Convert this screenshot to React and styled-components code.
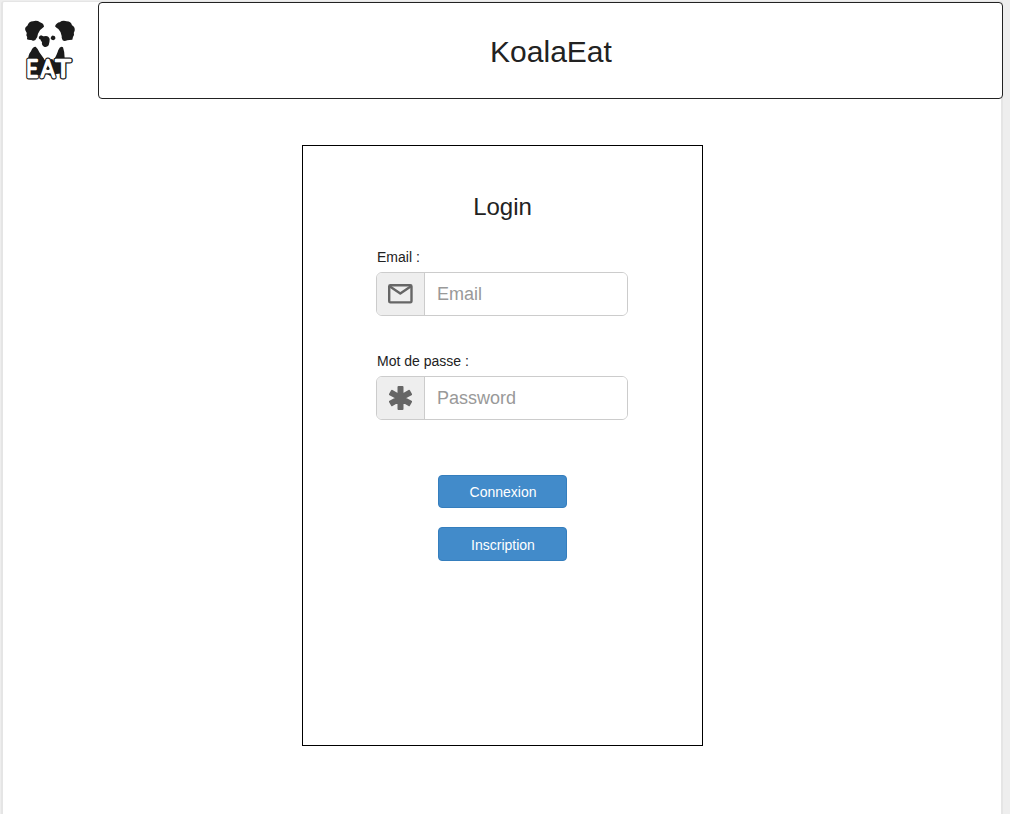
import React from "react";
import styled, { createGlobalStyle } from "styled-components";

const GlobalStyle = createGlobalStyle`
  * { box-sizing: border-box; }
  body {
    margin: 0;
    overflow: hidden;
    background: #eeeeee;
    color: #222222;
    font-family: "Liberation Sans", Arial, sans-serif;
    font-size: 14px;
    line-height: 20px;
  }
`;

const Page = styled.div`
  width: 1002px;
  height: 814px;
  margin-left: 1px;
  padding-top: 1px;
`;

const Sheet = styled.div`
  height: 813px;
  background: #ffffff;
  border: 2px solid #e5e5e5;
  border-top-width: 1px;
  border-bottom: 0;
  border-radius: 3px 3px 0 0;
`;

const Header = styled.header`
  display: flex;
  height: 97px;
  margin-right: -2px;
`;

const LogoLink = styled.a`
  flex: 0 0 95px;
  padding: 13px 0 0 12px;
`;

const LogoDrawing = styled.svg`
  display: block;
  width: 68px;
  height: 70px;
`;

const Banner = styled.div`
  flex: 1;
  display: flex;
  align-items: center;
  justify-content: center;
  padding: 2px 0 0 1px;
  background: #ffffff;
  border: 1px solid #222222;
  border-radius: 4px;
`;

const Brand = styled.h1`
  margin: 0;
  font-size: 30px;
  font-weight: 400;
  line-height: 35px;
`;

const LoginPanel = styled.main`
  width: 401px;
  height: 601px;
  margin: 46px 0 0 299px;
  padding: 46px 74px 0 74px;
  border: 1px solid #000000;
`;

const PanelTitle = styled.h2`
  margin: 0 0 25px;
  font-size: 24px;
  font-weight: 400;
  line-height: 30px;
  text-align: center;
`;

const Field = styled.div`
  margin-bottom: 35px;
`;

const Label = styled.label`
  display: block;
  height: 25px;
`;

const InputGroup = styled.div`
  display: flex;
  width: 252px;
  height: 44px;
  margin-left: -1px;
  border: 1px solid #cccccc;
  border-radius: 6px;
  overflow: hidden;
`;

const Addon = styled.span`
  display: flex;
  align-items: center;
  justify-content: center;
  width: 48px;
  padding-right: 1px;
  background: #eeeeee;
  border-right: 1px solid #cccccc;
`;

const AddonIcon = styled.svg`
  display: block;
  width: 26px;
  height: 26px;
`;

const Input = styled.input`
  flex: 1;
  min-width: 0;
  padding: 0 12px;
  border: 0;
  outline: 0;
  background: #ffffff;
  font: 18px "Liberation Sans", Arial, sans-serif;
  &::placeholder { color: #999999; opacity: 1; }
`;

const Actions = styled.div`
  display: flex;
  flex-direction: column;
  align-items: center;
  gap: 19px;
  margin-top: 55px;
`;

const Button = styled.button`
  width: 129px;
  height: ${(p) => p.$height}px;
  padding: 1px 0 0 1px;
  border: 1px solid #357ebd;
  border-radius: 4px;
  background: #428bca;
  color: #ffffff;
  font: 14px/20px "Liberation Sans", Arial, sans-serif;
`;

const letters = [
  { char: "E", x: 34, width: 35 },
  { char: "A", x: 78, width: 41 },
  { char: "T", x: 122, width: 44 },
];

function Lettering({ color, outline }) {
  return (
    <g fill={color} stroke={color} strokeWidth={outline}>
      {letters.map(({ char, x, width }) => (
        <text key={char} x={x} y="185" textLength={width} lengthAdjust="spacingAndGlyphs">
          {char}
        </text>
      ))}
    </g>
  );
}

function KoalaLogo() {
  return (
    <LogoDrawing viewBox="0 0 204 210" aria-label="Koala Eat">
      <g fill="#1b1b1b">
        <path d="M31 46Q28 37 37 32Q42 19 54 19Q66 15 75 22Q86 25 87 35Q74 43 69 56Q68 68 61 75Q54 79 49 75Q41 76 36 73Q38 66 34 61Q37 53 31 46Z" />
        <path d="M120 34Q125 23 134 22Q143 15 155 19Q168 19 171 31Q181 37 179 47Q175 52 177 60Q173 66 172 74Q162 74 157 76Q148 80 143 76Q139 71 140 63Q137 48 130 42Q124 39 120 34Z" />
        <path d="M77 76Q77 65 87 64Q100 60 104 72Q104 83 101 91Q95 98 87 95Q79 90 81 82Z" />
        <path d="M71 69L73 64L78 61L85 64L84 73L78 74L73 72Z" />
        <path d="M108 66Q111 60 115 62Q122 62 121 71Q117 78 110 74Q105 71 108 66Z" />
        <path d="M39 147Q38 118 48 109Q52 95 62 95Q69 101 74 113L87 131L95 150L86 181L48 181Z" />
        <path d="M114 140Q126 119 130 105Q136 92 144 97Q149 110 149 130L152 174L117 178Z" />
        <path d="M84 136L112 132L127 157L106 183L86 171Z" />
      </g>
      <g
        fontFamily="Lato, sans-serif"
        fontWeight="300"
        fontSize="70"
        strokeLinejoin="round"
        strokeLinecap="round"
      >
        <Lettering color="#171717" outline="15" />
        <Lettering color="#ffffff" outline="7.5" />
      </g>
      <ellipse cx="99" cy="160" rx="4" ry="5" fill="#171717" />
    </LogoDrawing>
  );
}

function MailIcon() {
  return (
    <AddonIcon viewBox="0 0 26 26" fill="none" stroke="#666666" strokeWidth="2.4" strokeLinejoin="round">
      <rect x="2.2" y="4.2" width="22.3" height="17.2" rx="1.2" />
      <path d="M2.6 5.2L13.3 12.5L24 5.2" />
    </AddonIcon>
  );
}

function AsteriskIcon() {
  return (
    <AddonIcon viewBox="0 0 26 26" stroke="#666666" fill="#666666" strokeWidth="2" strokeLinejoin="round">
      <path d="M11.5 2H15.5V9.5L22 5.8L24 9.3L17.5 13L24 16.7L22 20.2L15.5 16.5V24H11.5V16.5L5 20.2L3 16.7L9.5 13L3 9.3L5 5.8L11.5 9.5Z" />
    </AddonIcon>
  );
}

export default function App() {
  return (
    <>
      <GlobalStyle />
      <Page>
        <Sheet>
          <Header>
            <LogoLink><KoalaLogo /></LogoLink>
            <Banner><Brand>KoalaEat</Brand></Banner>
          </Header>
          <LoginPanel>
            <PanelTitle>Login</PanelTitle>
            <Field>
              <Label htmlFor="email">Email :</Label>
              <InputGroup>
                <Addon><MailIcon /></Addon>
                <Input id="email" type="email" placeholder="Email" />
              </InputGroup>
            </Field>
            <Field>
              <Label htmlFor="password">Mot de passe :</Label>
              <InputGroup>
                <Addon><AsteriskIcon /></Addon>
                <Input id="password" type="password" placeholder="Password" />
              </InputGroup>
            </Field>
            <Actions>
              <Button type="button" $height={33}>Connexion</Button>
              <Button type="button" $height={34}>Inscription</Button>
            </Actions>
          </LoginPanel>
        </Sheet>
      </Page>
    </>
  );
}
